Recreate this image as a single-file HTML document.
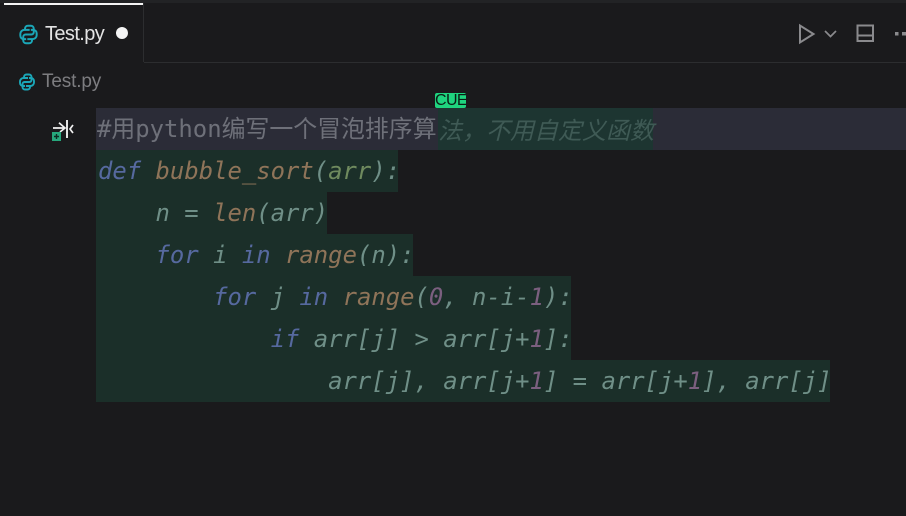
<!DOCTYPE html>
<html><head><meta charset="utf-8"><style>
html,body{margin:0;padding:0;background:#1a1a1c;width:906px;height:516px;overflow:hidden}
.a{position:absolute}
.l{position:absolute;left:96px;height:42px;background:#1b2f29}
.c{position:absolute;left:98px;height:42px;line-height:42px;white-space:pre;font-family:"DejaVu Sans Mono","Liberation Mono",monospace;font-size:23.9px;font-style:italic;color:#6f8f87;letter-spacing:0}
.k{color:#56699f}.f{color:#8f7459}.n{color:#7b5f7f}.v{color:#6f8a5e}.t{color:#7f9a96}
.ui{font-family:"Liberation Sans",sans-serif;position:absolute;white-space:pre}
</style></head><body>
<div class="a" style="left:0;top:0;width:906px;height:3px;background:#222325"></div>
<div class="a" style="left:4px;top:3px;width:139px;height:2px;background:#f4f4f4"></div>
<div class="a" style="left:143px;top:3px;width:1px;height:59px;background:#2c2d2f"></div>
<div class="a" style="left:144px;top:62px;width:762px;height:1px;background:#2c2d2f"></div>

<svg class="a" style="left:18px;top:24px" width="21" height="21" viewBox="0 0 18 18" fill="none" stroke="#1ba7b8" stroke-width="1.700"><path d="M10 5H5.500A3.500 3.500 0 0 0 2 8.500V10A3 3 0 0 0 5 13H7"/><path d="M6 5V4A2.500 2.500 0 0 1 8.500 1.500H11A2.500 2.500 0 0 1 13.500 4V7A2 2 0 0 1 11.500 9H6.500A2 2 0 0 0 4.500 11V14A2.500 2.500 0 0 0 7 16.500H9.500A2.500 2.500 0 0 0 12 14V13"/><path d="M8 13H12.500A3.500 3.500 0 0 0 16 9.500V8A3 3 0 0 0 13 5H11"/></svg>
<div class="ui" style="left:45px;top:22px;font-size:20px;line-height:24px;color:#e4e4e4;letter-spacing:-.6px">Test.py</div>
<div class="a" style="left:116px;top:27px;width:12px;height:12px;border-radius:50%;background:#f4f4f4"></div>

<svg class="a" style="left:18px;top:73px" width="18" height="18" viewBox="0 0 18 18" fill="none" stroke="#1ba7b8" stroke-width="1.900"><path d="M10 5H5.500A3.500 3.500 0 0 0 2 8.500V10A3 3 0 0 0 5 13H7"/><path d="M6 5V4A2.500 2.500 0 0 1 8.500 1.500H11A2.500 2.500 0 0 1 13.500 4V7A2 2 0 0 1 11.500 9H6.500A2 2 0 0 0 4.500 11V14A2.500 2.500 0 0 0 7 16.500H9.500A2.500 2.500 0 0 0 12 14V13"/><path d="M8 13H12.500A3.500 3.500 0 0 0 16 9.500V8A3 3 0 0 0 13 5H11"/></svg>
<div class="ui" style="left:42px;top:70px;font-size:19px;line-height:24px;color:#7d7d80;letter-spacing:-.15px">Test.py</div>

<svg class="a" style="left:790px;top:15px" width="116" height="36" viewBox="0 0 116 36" fill="none" stroke="#8a8a8d" stroke-width="2"><path d="M10 10.500V27.500L23.500 19Z"/><path d="M35 16L40.500 21.500L46 16" stroke-width="1.700"/><rect x="67.500" y="10.500" width="15.500" height="15.500"/><path d="M67.500 20.500H83"/><rect x="105" y="17" width="3.500" height="3.500" fill="#8a8a8d" stroke="none"/><rect x="112" y="17" width="4" height="3.500" fill="#8a8a8d" stroke="none"/></svg>

<svg class="a" style="left:50px;top:118px" width="28" height="26" viewBox="0 0 28 26" fill="none" stroke="#f0f0f0" stroke-width="1.700"><path d="M3 10H15M9 4.700L15 10L10 14"/><path d="M17 2V20" stroke-width="1.900"/><path d="M23 7L20 11L23 15"/><rect x="2" y="14" width="9" height="9" fill="#27a77c" stroke="none"/><path d="M4 18.500H9M6.500 16V21" stroke="#0d2b22" stroke-width="1.400"/></svg>

<div class="a" style="left:96px;top:108px;width:810px;height:42px;background:#2b2c37"></div>
<div class="a" style="left:438px;top:108px;width:215px;height:42px;background:#1d3531"></div>
<div class="l" style="top:150px;width:302px"></div>
<div class="l" style="top:192px;width:231px"></div>
<div class="l" style="top:234px;width:317px"></div>
<div class="l" style="top:276px;width:475px"></div>
<div class="l" style="top:318px;width:475px"></div>
<div class="l" style="top:360px;width:734px"></div>

<div class="a" style="left:435px;top:93px;width:31px;height:15px;background:#1fd47f;border-radius:2px;font:16px/16px 'Liberation Sans',sans-serif;color:#0a1f16;text-align:center;overflow:hidden;letter-spacing:-.6px">CUE</div>

<div class="c" style="top:108px;left:97px;font-style:normal;color:#6e7079;font-family:'DejaVu Sans Mono','Noto Sans CJK SC',monospace">#用python编写一个冒泡排序算</div>
<div class="c" style="top:108px;left:438px;color:#3f5a55;font-family:'Noto Sans CJK SC',sans-serif;font-size:24px;letter-spacing:0">法，不用自定义函数</div>
<div class="c" style="top:150px"><span class="k">def</span> <span class="f">bubble_sort</span>(<span class="v">arr</span>):</div>
<div class="c" style="top:192px">    n = <span class="f">len</span>(arr)</div>
<div class="c" style="top:234px">    <span class="k">for</span> i <span class="k">in</span> <span class="f">range</span>(n):</div>
<div class="c" style="top:276px">        <span class="k">for</span> j <span class="k">in</span> <span class="f">range</span>(<span class="n">0</span>, n-i-<span class="n">1</span>):</div>
<div class="c" style="top:318px">            <span class="k">if</span> arr[j] &gt; arr[j+<span class="n">1</span>]:</div>
<div class="c" style="top:360px">                arr[j], arr[j+<span class="n">1</span>] = arr[j+<span class="n">1</span>], arr[j]</div>
</body></html>
